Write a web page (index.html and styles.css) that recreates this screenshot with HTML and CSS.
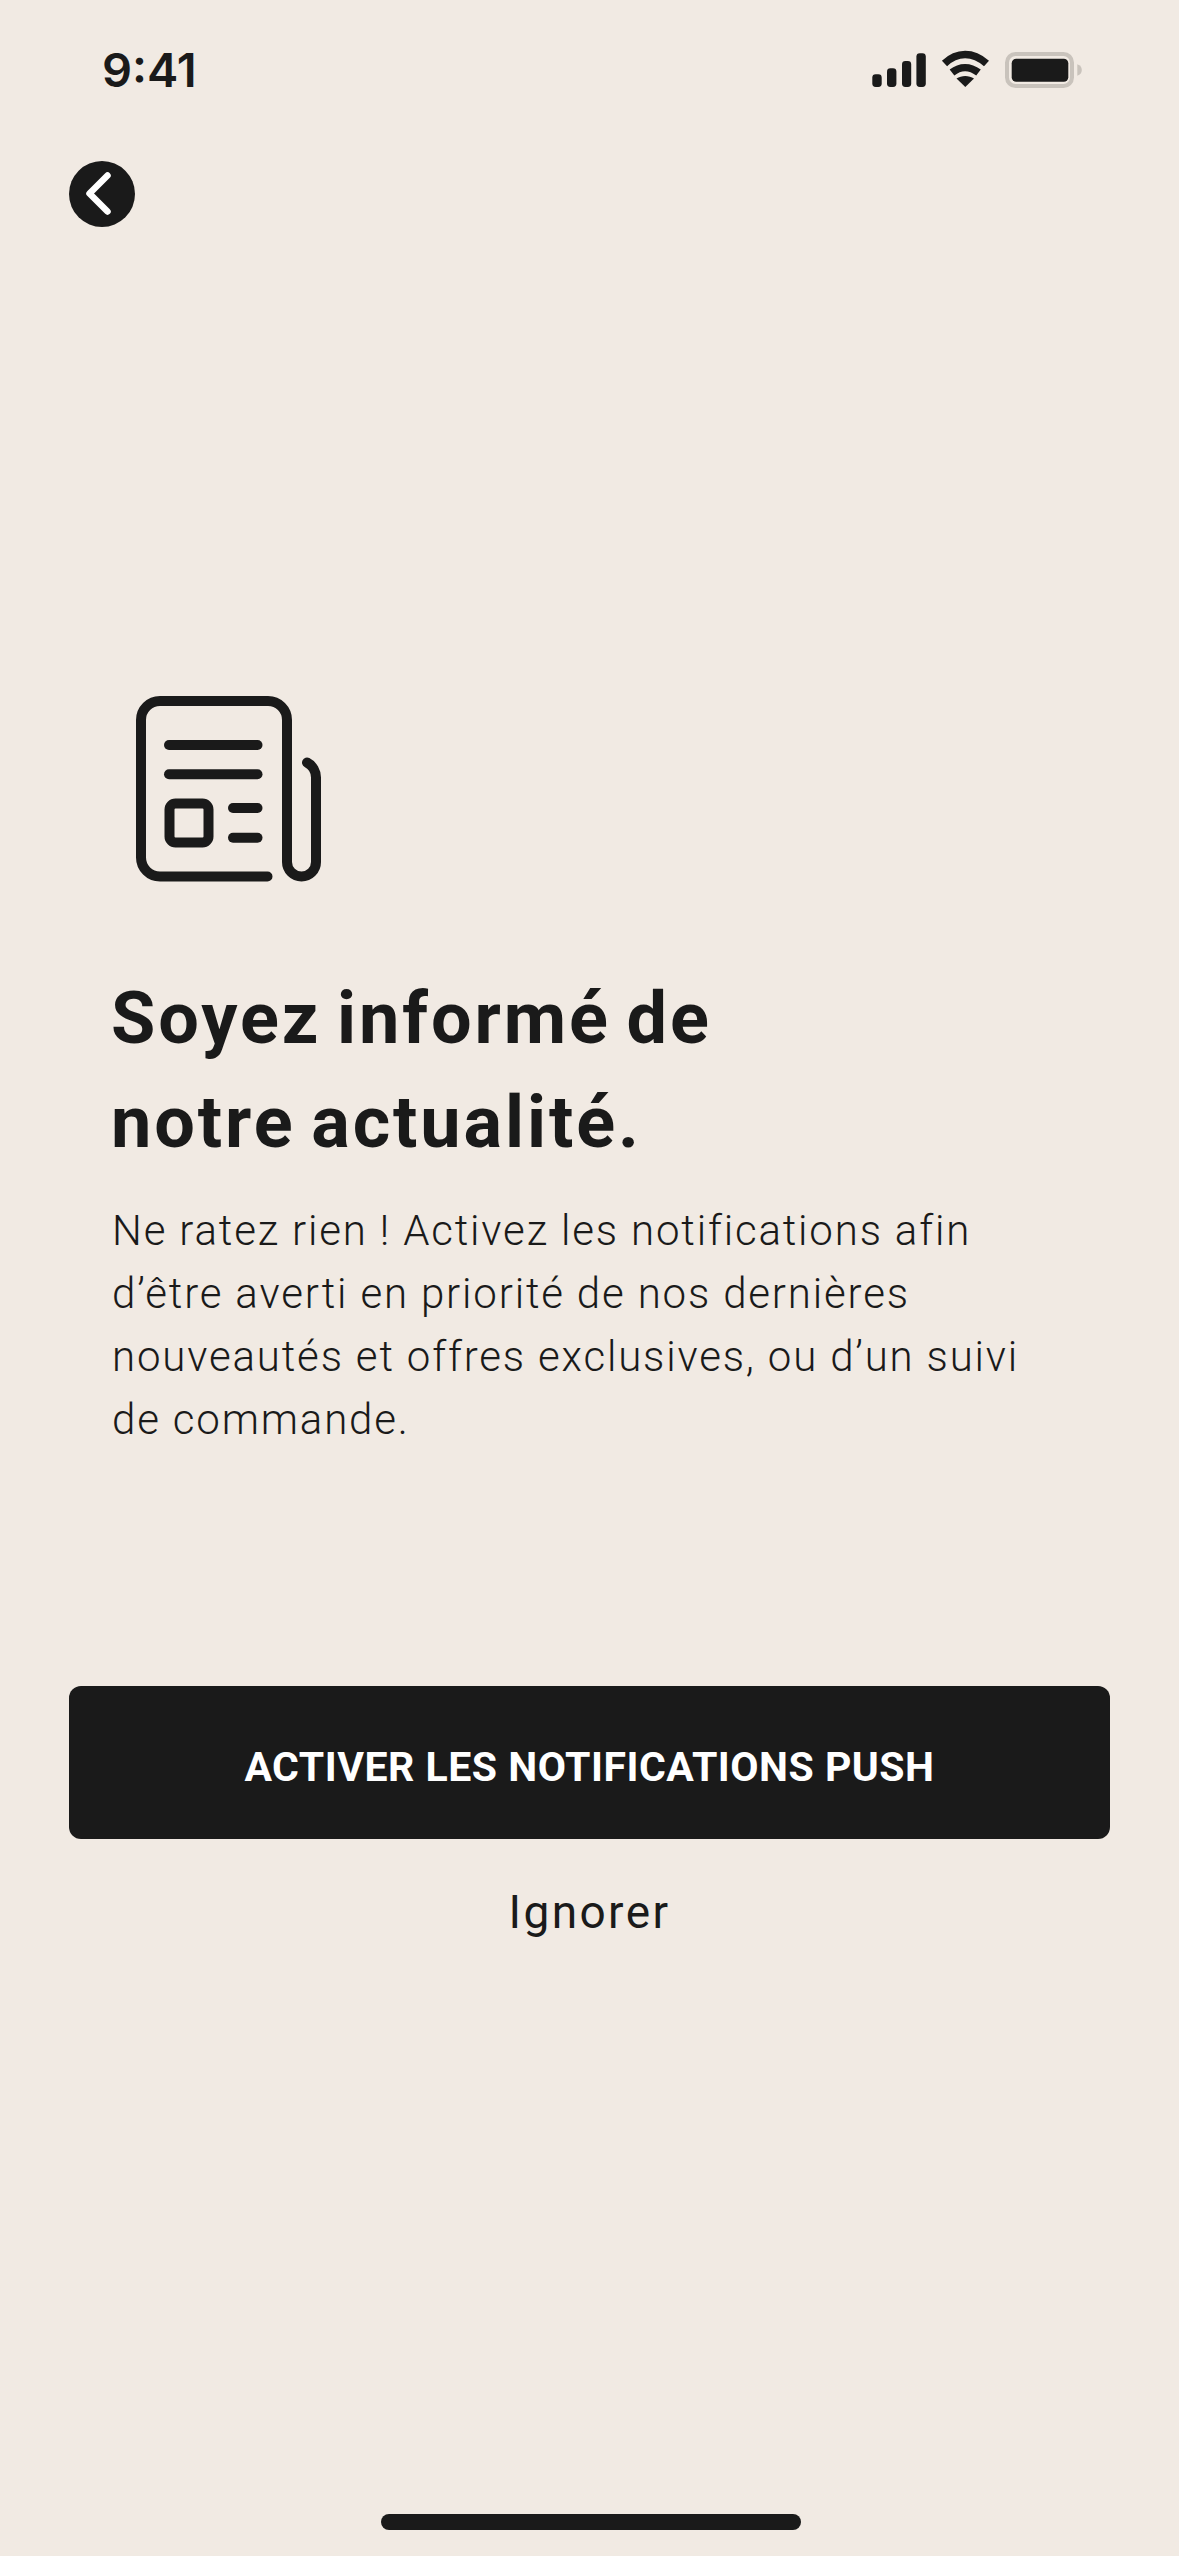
FILE: index.html
```html
<!DOCTYPE html>
<html lang="fr">
<head>
<meta charset="utf-8">
<title>Notifications</title>
<link rel="stylesheet" href="styles.css">
</head>
<body>
<main class="screen">
  <header class="status">
    <span class="time">9:41</span>
    <svg class="status-icons" width="260" height="80" viewBox="0 0 260 80" aria-hidden="true">
      <rect x="32.3" y="44.3" width="9.4" height="12.6" rx="3.4" class="ink"/>
      <rect x="47" y="38.3" width="9.4" height="18.6" rx="3.4" class="ink"/>
      <rect x="62" y="31" width="9.2" height="25.9" rx="3.4" class="ink"/>
      <rect x="76.4" y="23.2" width="9.4" height="33.7" rx="3.4" class="ink"/>
      <path class="wifi" d="M104.5 33.5 C117 21.5 133 21.5 146.5 33.5"/>
      <path class="wifi" d="M112 42.5 C120 36 130 36 138.500 42.500"/>
      <path class="ink" d="M125.300 57 L116.500 48.600 C121.500 45 129 45 134 48.600 Z"/>
      <rect x="167" y="24" width="65" height="32" rx="8.500" class="batt"/>
      <rect x="171.700" y="28.700" width="56.600" height="23" rx="4.500" class="ink"/>
      <path class="nub" d="M237.300 34.300 C240.500 35.300 241.800 37.500 241.800 40 C241.800 42.500 240.500 44.700 237.300 45.700 Z"/>
    </svg>
  </header>

  <button class="back" type="button" aria-label="Retour">
    <svg width="66" height="66" viewBox="0 0 66 66" aria-hidden="true">
      <circle cx="33" cy="33" r="33" class="ink"/>
      <path d="M38.500 14.500 L20.500 32.500 L38.500 50.500" class="chev"/>
    </svg>
  </button>

  <section class="content">
    <svg class="news" width="240" height="230" viewBox="0 0 240 230" aria-hidden="true">
      <g class="news-lines">
        <path d="M157.500 206.500 H50 a19 19 0 0 1 -19 -19 V50 a19 19 0 0 1 19 -19 H158 a19 19 0 0 1 19 19 V192 a14.500 14.500 0 0 0 29 0 V108 a17 17 0 0 0 -9 -15.500"/>
        <path d="M59 75 H147.500"/>
        <path d="M59 104.300 H147.500"/>
        <rect x="59.500" y="133.500" width="39" height="39" rx="6"/>
        <path d="M123 138 H147.500"/>
        <path d="M123 167.700 H147.500"/>
      </g>
    </svg>
    <h1 class="title">Soyez informé de<br>notre actualité.</h1>
    <p class="lead">Ne ratez rien ! Activez les notifications afin<br>d’être averti en priorité de nos dernières<br>nouveautés et offres exclusives, ou d’un suivi<br>de commande.</p>
  </section>

  <section class="actions">
    <button class="primary" type="button">ACTIVER LES NOTIFICATIONS PUSH</button>
    <button class="skip" type="button">Ignorer</button>
  </section>

  <div class="home"></div>
</main>
</body>
</html>
```

FILE: styles.css
```css
* { box-sizing: border-box; }
html, body { margin: 0; padding: 0; }
body { background: #f1eae3; font-family: Roboto, "Liberation Sans", sans-serif; color: #1a1a1a; }
.screen { width: 1179px; height: 2556px; display: flex; flex-direction: column; overflow: hidden; }

.status { height: 110px; padding: 30px 79px 0 102px; display: flex; justify-content: space-between; align-items: flex-start; flex: none; }
.time { font-family: Inter, sans-serif; font-weight: 600; font-size: 47px; line-height: 80px; letter-spacing: 0; }
.status-icons { display: block; }
.ink { fill: #1a1a1a; }
.wifi { fill: none; stroke: #1a1a1a; stroke-width: 7.500; }
.batt { fill: none; stroke: #c9c3bc; stroke-width: 4; }
.nub { fill: #c9c3bc; }

.back { align-self: flex-start; width: 66px; height: 66px; margin: 51px 0 0 69px; padding: 0; border: 0; background: none; flex: none; }
.back svg { display: block; }
.chev { fill: none; stroke: #fff; stroke-width: 6.500; stroke-linecap: round; stroke-linejoin: round; }

.content { padding: 443px 0 0 111px; flex: none; }
.news { display: block; margin-left: -1px; }
.news-lines { fill: none; stroke: #1a1a1a; stroke-width: 10; stroke-linecap: round; stroke-linejoin: round; }
.title { margin: 67px 0 0; font-size: 72px; line-height: 104px; font-weight: 700; letter-spacing: 2.900px; word-spacing: -5px; }
.lead { margin: 24px 0 0 1px; font-size: 42px; line-height: 63px; font-weight: 300; letter-spacing: 1.830px; }

.actions { display: flex; flex-direction: column; align-items: center; margin: 0 69px; padding-top: 235px; flex: none; }
.primary { width: 100%; height: 153px; padding: 8px 0 0; border: 0; border-radius: 12px; background: #1a1a1a; color: #fff; font: 700 41px Roboto, sans-serif; letter-spacing: 0.500px; }
.skip { margin-top: 41px; padding: 0; border: 0; background: none; color: #1a1a1a; font: 400 46px/64px Roboto, sans-serif; letter-spacing: 2.400px; }

.home { width: 420px; height: 16px; border-radius: 8px; background: #1a1a1a; margin: auto auto 26px 381px; flex: none; }
```
